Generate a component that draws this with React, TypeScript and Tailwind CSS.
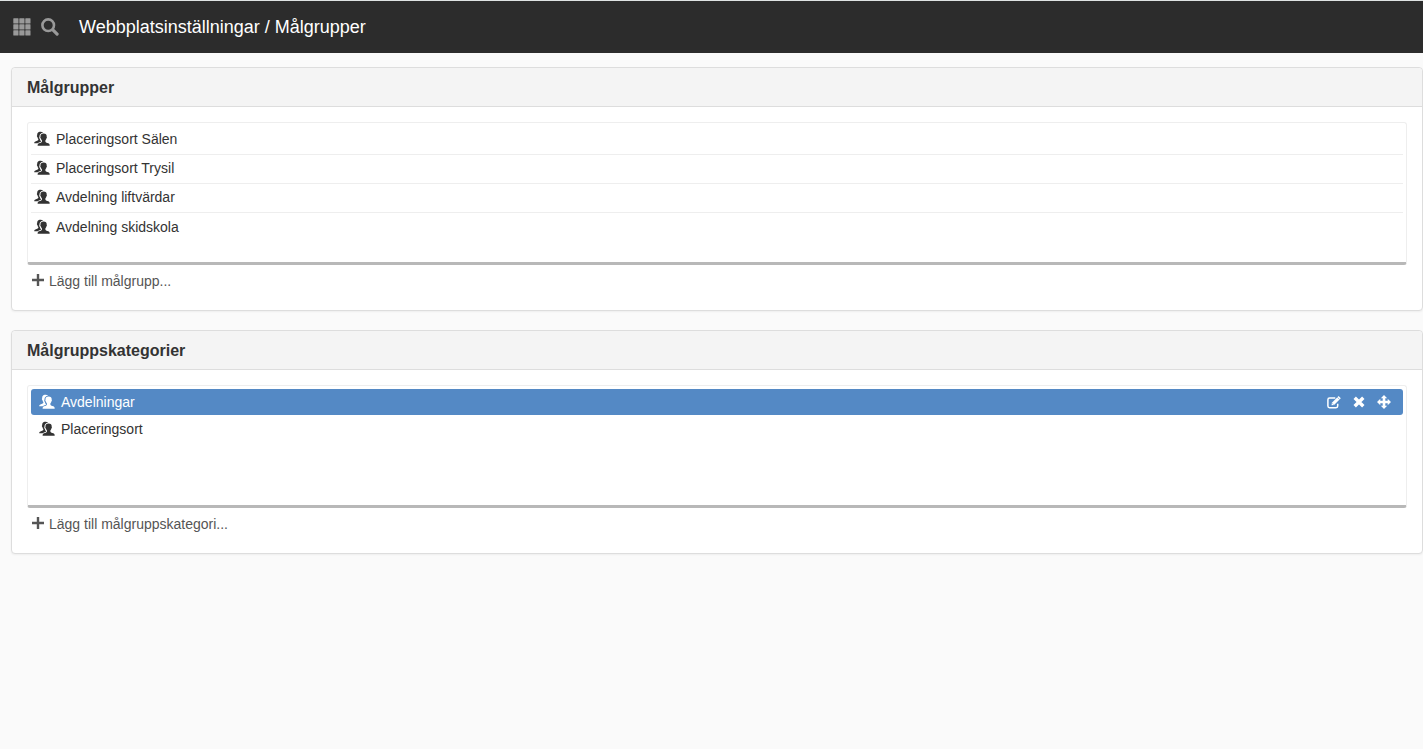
import type { ReactNode } from "react";

const targetGroups = [
  "Placeringsort Sälen",
  "Placeringsort Trysil",
  "Avdelning liftvärdar",
  "Avdelning skidskola",
];

const GridIcon = () => (
  <svg viewBox="0 0 18 18" className="size-[18px]" fill="currentColor" aria-hidden="true">
    {[0, 6, 12].map((y) =>
      [0, 6, 12].map((x) => <rect key={`${x}-${y}`} x={x + 0.3} y={y + 0.3} width="5.2" height="5.2" rx="0.5" />)
    )}
  </svg>
);

const SearchIcon = () => (
  <svg viewBox="0 0 18 18" className="size-[18px]" fill="none" stroke="currentColor" aria-hidden="true">
    <circle cx="7.2" cy="7.2" r="5.8" strokeWidth="2.6" />
    <path d="M11.4 11.4l1.600 1.600" strokeWidth="2.6" />
    <path d="M12.9 12.9l3.200 3.200" strokeWidth="3.2" strokeLinecap="round" />
  </svg>
);

const GroupIcon = () => (
  <svg viewBox="0 0 16 16" className="size-4 shrink-0" fill="currentColor" aria-hidden="true">
    <path d="M9.200 1.700C8.300.8 6.900.5 5.500.800 3.800 1.200 3 2.500 3.200 4.300c-.5.3-.3 1.500.2 1.800.1.900.5 1.500.9 2v1C3.900 10 1.300 10.200.6 11c-.3.300-.4.700-.4 1.200h3.400c.8-.5 1.900-.7 2.700-1.100.3-.2.600-.4.700-.7-.6-.8-1-1.500-1.100-2.400-.7-.6-.8-1.900-.4-2.600C5.400 3.300 6.800 1.900 9.200 1.700z" />
    <path d="M9.600 2.500c-2.100 0-3.300 1.200-3.100 3.200-.4.300-.2 1.400.3 1.700.2.900.6 1.400 1.100 1.900v1.500c-.4 1-3.200 1.300-3.900 2.200-.3.400-.4 1-.4 1.700h12.100c0-.7-.1-1.300-.4-1.700-.8-.9-3.500-1.200-3.900-2.200V9.300c.5-.5.800-1 1-1.900.5-.3.700-1.400.3-1.700.2-2-1-3.200-3.100-3.200z" />
  </svg>
);

const PlusIcon = () => (
  <svg viewBox="0 0 12 12" className="mb-0.5 size-3" fill="currentColor" aria-hidden="true">
    <path d="M4.800 0h2.400v4.800H12v2.400H7.200V12H4.800V7.200H0V4.800h4.800z" />
  </svg>
);

const EditIcon = () => (
  <svg viewBox="0 0 14 14" className="size-3.5" fill="none" stroke="currentColor" aria-hidden="true">
    <path d="M8.300 3H2.600Q.9 3 .9 4.700v6.400q0 1.700 1.700 1.700h6.400q1.700 0 1.700-1.700V8.700" strokeWidth="1.500" />
    <path d="M4.500 10.300l.4-2.600L11.600 1l2.200 2.200L7.100 9.900z" fill="currentColor" stroke="none" />
    <path d="M10.300 2.200l2.300 2.300M5.400 8.300l1.300 1.300" stroke="#5489c5" strokeWidth=".6" />
  </svg>
);

const RemoveIcon = () => (
  <svg viewBox="0 0 12 12" className="size-3" fill="none" stroke="currentColor" aria-hidden="true">
    <path d="M1.700 1.700l8.600 8.600M10.300 1.700l-8.600 8.600" strokeWidth="3.400" />
  </svg>
);

const MoveIcon = () => (
  <svg viewBox="0 0 14 14" className="size-3.5" fill="currentColor" aria-hidden="true">
    <path d="M7 0l3.200 3.300H8.300v2.400h2.400V3.800L14 7l-3.300 3.200V8.300H8.300v2.400h1.900L7 14l-3.200-3.300h1.900V8.300H3.300v1.900L0 7l3.300-3.200v1.900h2.400V3.300H3.800z" />
  </svg>
);

const Panel = ({ title, addLabel, children }: { title: string; addLabel: string; children: ReactNode }) => (
  <section className="rounded border border-[#dddddd] bg-white shadow-xs">
    <h2 className="flex h-[39px] items-center rounded-t border-b border-[#dddddd] bg-[#f4f4f4] px-[15px] pt-0.5 text-base font-bold">
      {title}
    </h2>
    <div className="px-[15px] pt-[15px] pb-[19px]">
      {children}
      <button type="button" className="mt-1.5 flex h-5 items-center gap-[5px] pl-[5px] text-[#555555]">
        <PlusIcon />
        {addLabel}
      </button>
    </div>
  </section>
);

const App = () => {
  return (
    <div className="min-h-screen bg-[#fafafa] font-['Liberation_Sans',Arial,sans-serif] text-sm text-[#333333]">
      <header className="flex h-[53px] items-center border-t border-[#dfe3e3] bg-[#2c2c2c] pl-[13px]">
        <button type="button" aria-label="Meny" className="text-[#999999]">
          <GridIcon />
        </button>
        <button type="button" aria-label="Sök" className="ml-[10px] text-[#999999]">
          <SearchIcon />
        </button>
        <h1 className="ml-5 text-lg text-white">Webbplatsinställningar / Målgrupper</h1>
      </header>

      <main className="flex flex-col gap-[19px] pt-[14px] pl-[11px]">
        <Panel title="Målgrupper" addLabel="Lägg till målgrupp...">
          <ul className="min-h-[143px] rounded-[3px] border border-b-3 border-[#eeeeee] border-b-[#b8b8b8] p-[3px]">
            {targetGroups.map((name) => (
              <li
                key={name}
                className="flex h-[29px] items-center gap-[6px] border-b border-[#eeeeee] pb-0.5 pl-[3px] last:border-b-0"
              >
                <GroupIcon />
                {name}
              </li>
            ))}
          </ul>
        </Panel>

        <Panel title="Målgruppskategorier" addLabel="Lägg till målgruppskategori...">
          <ul className="min-h-[123px] rounded-[3px] border border-b-3 border-[#eeeeee] border-b-[#b8b8b8] p-[3px]">
            <li className="flex h-[26px] items-center justify-between rounded-[3px] bg-[#5489c5] pr-3 pl-2 text-white">
              <span className="flex items-center gap-[6px]">
                <GroupIcon />
                Avdelningar
              </span>
              <span className="flex items-center gap-3">
                <button type="button" aria-label="Redigera">
                  <EditIcon />
                </button>
                <button type="button" aria-label="Ta bort">
                  <RemoveIcon />
                </button>
                <button type="button" aria-label="Flytta">
                  <MoveIcon />
                </button>
              </span>
            </li>
            <li className="mt-px flex h-[26px] items-center gap-[6px] pl-2">
              <GroupIcon />
              Placeringsort
            </li>
          </ul>
        </Panel>
      </main>
    </div>
  );
};

export default App;
